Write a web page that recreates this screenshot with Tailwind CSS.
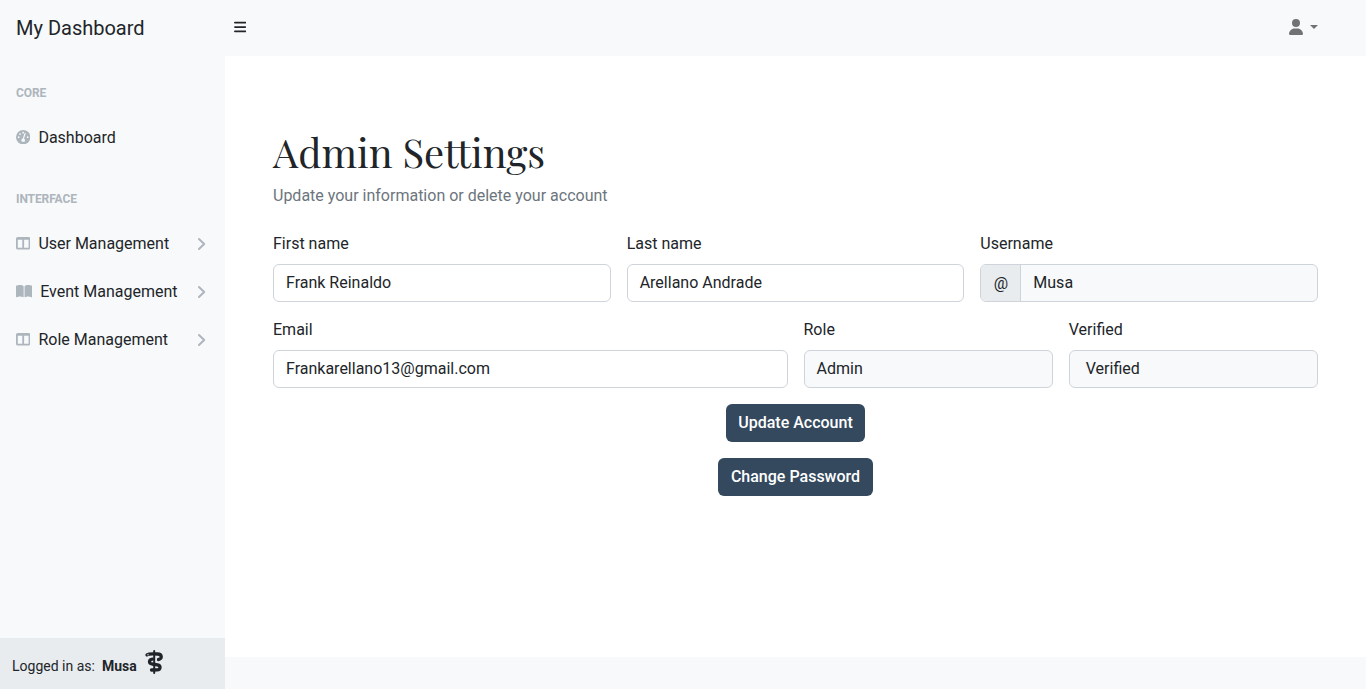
<!DOCTYPE html>
<html lang="en">
<head>
<meta charset="utf-8">
<title>My Dashboard</title>
<script src="https://cdn.jsdelivr.net/npm/@tailwindcss/browser@4"></script>
</head>
<body class="h-[689px] overflow-hidden bg-white font-['Roboto',sans-serif] text-base text-[#212529]">
<svg class="hidden">
  <symbol id="columns" viewBox="0 0 512 512"><path d="M0 96C0 60.7 28.7 32 64 32H448c35.3 0 64 28.7 64 64V416c0 35.3-28.7 64-64 64H64c-35.3 0-64-28.7-64-64V96zm64 36V416H224V132H64zm384 0H288V416H448V132z"/></symbol>
  <symbol id="chevron" viewBox="0 0 10 16"><path d="M2 3l5.200 5L2 13" fill="none" stroke="currentColor" stroke-width="2" stroke-linecap="round" stroke-linejoin="round"/></symbol>
</svg>
<div class="flex h-full flex-col">
  <nav class="flex h-14 shrink-0 items-center bg-[#f8f9fa]">
    <a class="w-[225px] pl-4 text-xl leading-[30px]">My Dashboard</a>
    <button class="flex items-center pl-[9px]">
      <svg class="mb-0.5 h-[14px] w-[12.25px]" viewBox="0 0 448 512" fill="#212529"><path d="M0 96C0 78.3 14.3 64 32 64H416c17.7 0 32 14.3 32 32s-14.3 32-32 32H32C14.3 128 0 113.7 0 96zM0 256c0-17.7 14.3-32 32-32H416c17.7 0 32 14.3 32 32s-14.3 32-32 32H32c-17.7 0-32-14.3-32-32zM448 416c0 17.7-14.3 32-32 32H32c-17.7 0-32-14.3-32-32s14.3-32 32-32H416c17.7 0 32 14.3 32 32z"/></svg>
    </button>
    <div class="ml-auto mr-12 flex items-center gap-[7px] pb-0.5 text-[#717273]">
      <svg class="h-4 w-[14px]" viewBox="0 0 448 512" fill="currentColor"><path d="M224 256A128 128 0 1 0 224 0a128 128 0 1 0 0 256zm-45.7 48C79.8 304 0 383.8 0 482.3C0 498.7 13.3 512 29.7 512H418.3c16.4 0 29.7-13.3 29.7-29.7C448 383.8 368.2 304 269.7 304H178.3z"/></svg>
      <span class="border-x-[4.8px] border-t-[4.8px] border-x-transparent border-t-current"></span>
    </div>
  </nav>
  <div class="flex min-h-0 flex-1">
    <aside class="flex w-[225px] shrink-0 flex-col bg-[#f8f9fa]">
      <div class="flex flex-1 flex-col">
        <div class="px-4 pt-7 pb-3 text-xs leading-[18px] font-bold tracking-[-0.1px] text-[#adb5bd]">CORE</div>
        <a class="flex h-12 items-center px-4"><svg class="mr-2 mb-[1.600px] size-[14.4px] text-[#adb5bd]" viewBox="0 0 512 512"><circle cx="256" cy="256" r="256" fill="currentColor"/><g fill="#f8f9fa"><circle cx="256" cy="96" r="32"/><circle cx="144" cy="144" r="32"/><circle cx="96" cy="256" r="32"/><circle cx="416" cy="256" r="32"/><path d="M333 106c12 5 18 19 13 31L285 304c21 15 35 37 35 64 0 17-5 32-14 48H206c-9-16-14-31-14-48 0-36 28-64 49-64l60-183c5-12 20-20 32-15z"/></g></svg>Dashboard</a>
        <div class="px-4 pt-7 pb-3 text-xs leading-[18px] font-bold tracking-[-0.1px] text-[#adb5bd]">INTERFACE</div>
        <a class="flex h-12 items-center px-4"><svg class="mr-2 mb-[1.600px] size-[14.4px] fill-[#adb5bd]"><use href="#columns"/></svg>User Management<svg class="mr-[2px] ml-auto h-4 w-[10px] text-[#adb5bd]"><use href="#chevron"/></svg></a>
        <a class="flex h-12 items-center px-4"><svg class="mr-2 mb-[1.600px] h-[14.4px] w-[16.2px] fill-[#adb5bd]" viewBox="0 0 576 512"><path d="M249.6 471.5c10.8 3.8 22.4-4.1 22.4-15.5V78.6c0-4.2-1.600-8.400-5-11C247.400 52 202.400 32 144 32C93.500 32 46.300 45.300 18.100 56.100C6.800 60.500 0 71.700 0 83.800V454.100c0 11.900 12.800 20.200 24.100 16.500C55.600 460.100 105.500 448 144 448c33.900 0 79 14 105.600 23.500zm76.800 0C353 462 398.100 448 432 448c38.500 0 88.400 12.100 119.900 22.600c11.300 3.800 24.100-4.600 24.100-16.500V83.800c0-12.100-6.800-23.300-18.100-27.600C529.700 45.300 482.500 32 432 32c-58.400 0-103.400 20-123 35.600c-3.300 2.600-5 6.800-5 11V456c0 11.400 11.700 19.300 22.400 15.500z"/></svg>Event Management<svg class="mr-[2px] ml-auto h-4 w-[10px] text-[#adb5bd]"><use href="#chevron"/></svg></a>
        <a class="flex h-12 items-center px-4"><svg class="mr-2 mb-[1.600px] size-[14.4px] fill-[#adb5bd]"><use href="#columns"/></svg>Role Management<svg class="mr-[2px] ml-auto h-4 w-[10px] text-[#adb5bd]"><use href="#chevron"/></svg></a>
      </div>
      <div class="flex h-[51px] items-center bg-[#e9ecef] pl-3 text-sm">
        <span class="pt-[5px]">Logged in as:</span><strong class="ml-[7px] pt-[5px] font-bold">Musa</strong>
        <svg class="mb-[3px] ml-[7px] h-6 w-[20px]" viewBox="0 0 20 24" fill="none" stroke="#212529" stroke-linecap="round"><path d="M10.200 1v22" stroke-width="2"/><path d="M3 4.800C5 3.600 7 4 13.500 4c4.800 0 4.800 5.200 1 5.500M8.500 9.200c-4 .6-3.800 4.200-.5 4.800l5.500 .8c3.600 .8 3.200 4.800-.3 5L7.500 20" stroke-width="3.300"/><circle cx="4" cy="4.800" r=".7" fill="#e9ecef" stroke="none"/></svg>
      </div>
    </aside>
    <div class="flex flex-1 flex-col">
      <main class="flex-1 px-12 pt-[72px]">
        <h1 class="h-12 font-['Playfair_Display',serif] text-[40px] leading-[48px] whitespace-nowrap">Admin Settings</h1>
        <p class="mt-2 leading-6 text-[#6c757d]">Update your information or delete your account</p>
        <form>
          <div class="mt-6 grid grid-cols-3 gap-4">
            <label class="block">First name<span class="mt-2 flex h-[38px] rounded-md border border-[#ced4da] px-3 py-1.5">Frank Reinaldo</span></label>
            <label class="block">Last name<span class="mt-2 flex h-[38px] rounded-md border border-[#ced4da] px-3 py-1.5">Arellano Andrade</span></label>
            <label class="block">Username<span class="mt-2 flex h-[38px] overflow-hidden rounded-md border border-[#ced4da] bg-[#f8f9fa]"><span class="w-10 border-r border-[#ced4da] bg-[#e9ecef] py-[7px] text-center">@</span><span class="px-3 py-1.5">Musa</span></span></label>
          </div>
          <div class="mt-4 grid grid-cols-4 gap-4">
            <label class="col-span-2 block">Email<span class="mt-2 flex h-[38px] rounded-md border border-[#ced4da] px-3 py-1.5">Frankarellano13@gmail.com</span></label>
            <label class="block">Role<span class="mt-2 flex h-[38px] rounded-md border border-[#ced4da] bg-[#f8f9fa] px-3 py-1.5">Admin</span></label>
            <label class="block">Verified<span class="mt-2 flex h-[38px] rounded-md border border-[#ced4da] bg-[#f8f9fa] px-4 py-1.5">Verified</span></label>
          </div>
          <div class="mt-4 flex flex-col items-center gap-4 font-medium text-white">
            <button class="h-[38px] w-[139px] rounded-md bg-[#34495e] pb-px">Update Account</button>
            <button class="h-[38px] w-[155px] rounded-md bg-[#34495e] pb-px">Change Password</button>
          </div>
        </form>
      </main>
      <footer class="h-8 bg-[#f8f9fa]"></footer>
    </div>
  </div>
</div>
</body>
</html>
